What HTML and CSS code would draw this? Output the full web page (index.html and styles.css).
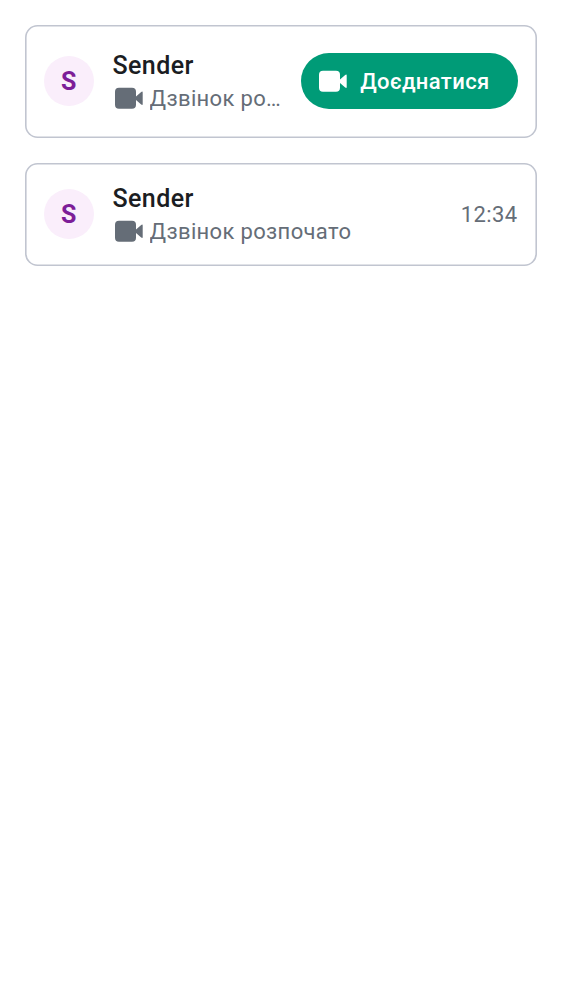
FILE: index.html
```html
<!DOCTYPE html>
<html lang="uk">
<head>
<meta charset="utf-8">
<title>Calls</title>
<link rel="stylesheet" href="styles.css">
</head>
<body>
<main class="list">
  <section class="card card-join">
    <div class="avatar">S</div>
    <div class="info">
      <div class="name">Sender</div>
      <div class="status">
        <svg class="cam" viewBox="0 0 28 22"><path d="M4 .8H17a4 4 0 0 1 4 4V9.500L26.200 4.900Q27.700 3.800 27.700 5.400V17Q27.700 18.700 26.200 17.500L21 13V17.800a4 4 0 0 1-4 4H4a4 4 0 0 1-4-4V4.800a4 4 0 0 1 4-4Z"/></svg>
        <span class="label">Дзвінок розпочато</span>
      </div>
    </div>
    <button class="join">
      <svg class="cam" viewBox="0 0 28 22"><path d="M4 .8H17a4 4 0 0 1 4 4V9.500L26.200 4.900Q27.700 3.800 27.700 5.400V17Q27.700 18.700 26.200 17.500L21 13V17.800a4 4 0 0 1-4 4H4a4 4 0 0 1-4-4V4.800a4 4 0 0 1 4-4Z"/></svg>
      <span>Доєднатися</span>
    </button>
  </section>
  <section class="card">
    <div class="avatar">S</div>
    <div class="info">
      <div class="name">Sender</div>
      <div class="status">
        <svg class="cam" viewBox="0 0 28 22"><path d="M4 .8H17a4 4 0 0 1 4 4V9.500L26.200 4.900Q27.700 3.800 27.700 5.400V17Q27.700 18.700 26.200 17.500L21 13V17.800a4 4 0 0 1-4 4H4a4 4 0 0 1-4-4V4.800a4 4 0 0 1 4-4Z"/></svg>
        <span class="label">Дзвінок розпочато</span>
      </div>
    </div>
    <time class="time">12:34</time>
  </section>
</main>
</body>
</html>
```
FILE: styles.css
```css
* { box-sizing: border-box; }
body { margin: 0; background: #fff; font-family: Roboto, "Noto Sans", sans-serif; }
.list { display: flex; flex-direction: column; gap: 25px; padding: 25px; }
.card { display: flex; align-items: center; height: 103px; padding: 0 18.750px; border-radius: 12.500px; box-shadow: inset 0 0 0 1.600px #c1c5d0; }
.card-join { height: 112.500px; }
.avatar { flex: none; width: 50px; height: 50px; padding-top: 1px; border-radius: 50%; background: #faeefb; color: #7d1d98; font-size: 25px; font-weight: 700; line-height: 50px; text-align: center; }
.info { flex: 1; min-width: 0; margin-left: 18.750px; padding-top: 1px; }
.name { color: #1b1d22; font-size: 25px; font-weight: 500; line-height: 33px; letter-spacing: .42px; }
.status { display: flex; align-items: center; gap: 6.700px; padding-left: 2.400px; color: #656d77; font-size: 22px; line-height: 33px; letter-spacing: .34px; }
.label { overflow: hidden; text-overflow: ellipsis; white-space: nowrap; }
.cam { flex: none; width: 28px; height: 22px; fill: currentColor; }
.join { display: flex; flex: none; align-items: center; gap: 13px; width: 217px; height: 56px; margin-left: 18px; padding: 0 18px; border: 0; border-radius: 28px; background: #009b77; color: #fff; font: 500 22px/32px Roboto, sans-serif; letter-spacing: .38px; white-space: nowrap; }
.join span { padding-top: 1px; }
.time { margin-right: .8px; color: #656d77; font-size: 22px; letter-spacing: .39px; }
```
